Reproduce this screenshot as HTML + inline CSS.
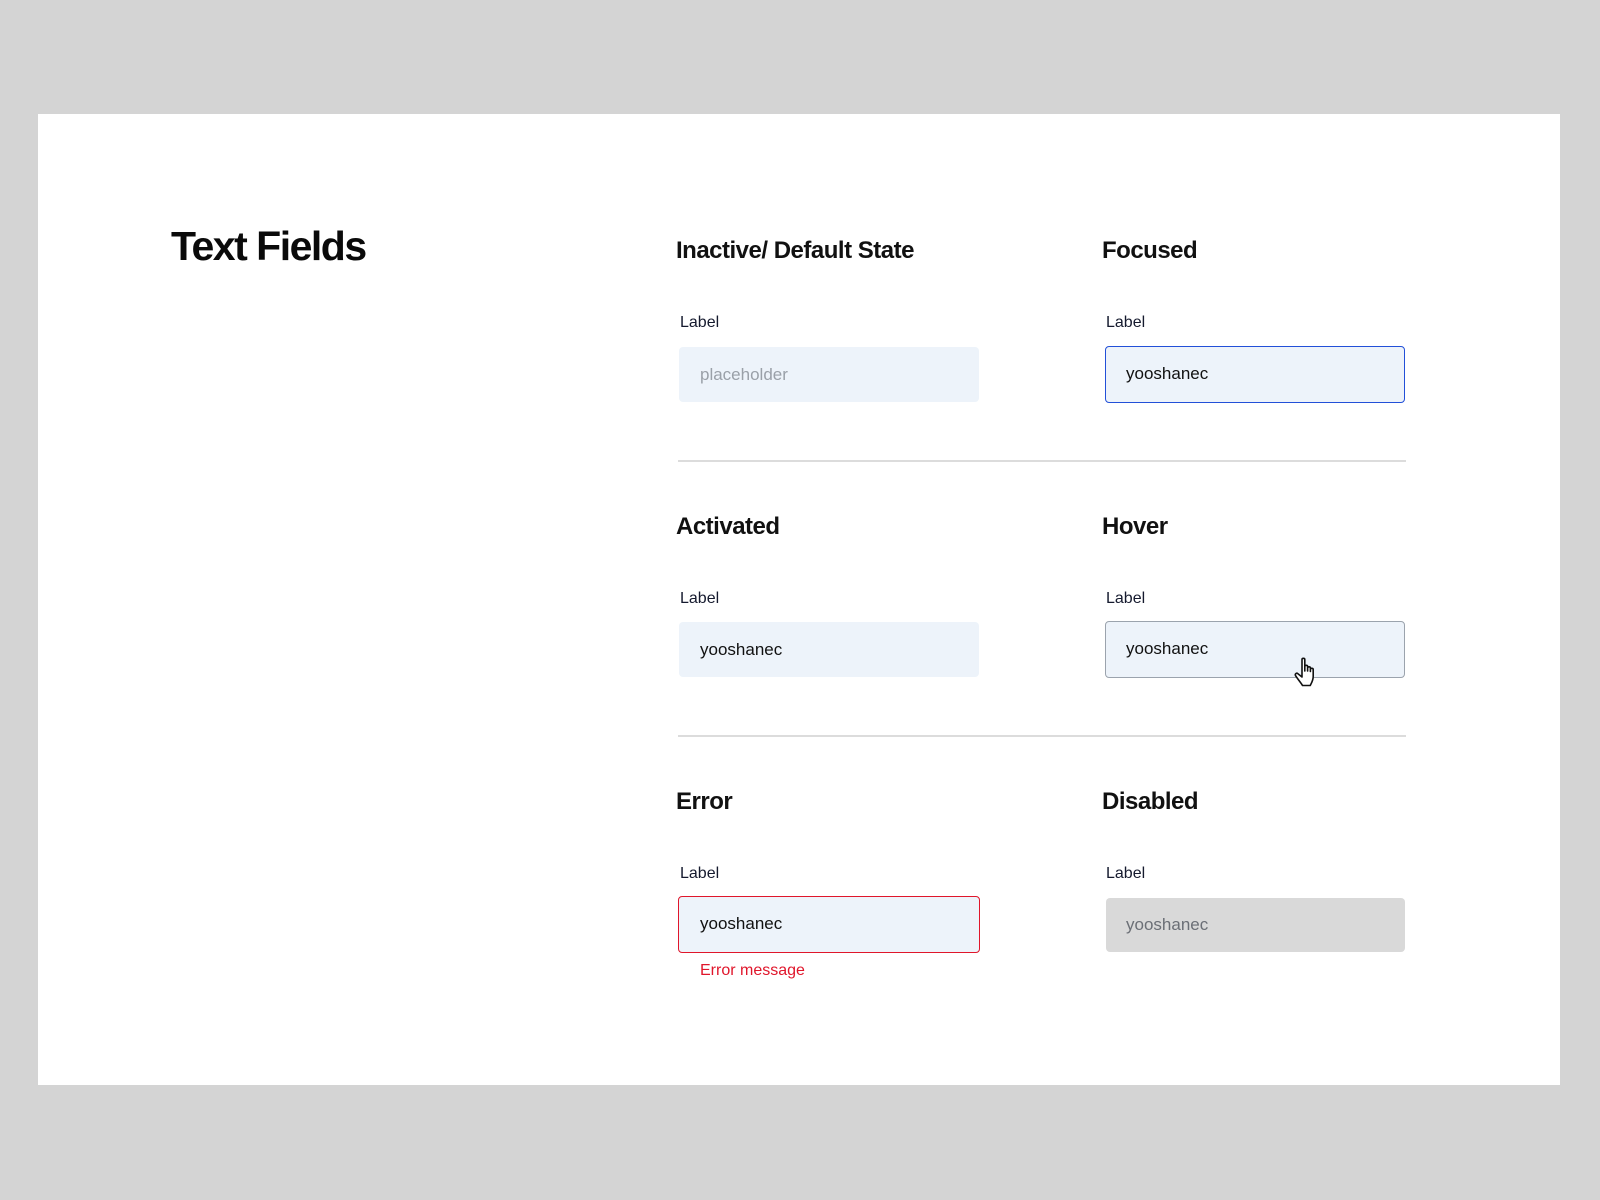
<!DOCTYPE html>
<html><head><style>
*{margin:0;padding:0;box-sizing:border-box}
body{width:1600px;height:1200px;background:#d4d4d4;position:relative;font-family:"Liberation Sans",sans-serif;overflow:hidden}
.card{position:absolute;left:38px;top:114px;width:1522px;height:971px;background:#fff}
.t{position:absolute;white-space:nowrap;line-height:1}
h1{position:absolute;left:171px;top:226px;font-size:41px;font-weight:bold;letter-spacing:-1.5px;color:#0a0a0a;line-height:1}
.h{font-size:24px;font-weight:bold;color:#111;letter-spacing:-0.5px}
.l{font-size:16px;color:#151a2e}
.box{position:absolute;width:300px;height:55px;background:#edf3fa;border-radius:4px;font-size:17px;color:#111;padding-left:21px;line-height:55px}
.div{position:absolute;left:678px;width:728px;height:2px;background:#dcdcdc}
</style></head><body>
<div class="card"></div>
<h1>Text Fields</h1>

<div class="t h" style="left:676px;top:239px">Inactive/ Default State</div>
<div class="t h" style="left:1102px;top:239px">Focused</div>
<div class="t l" style="left:680px;top:315px">Label</div>
<div class="t l" style="left:1106px;top:315px">Label</div>
<div class="box" style="left:679px;top:347px;color:#9aa0a8">placeholder</div>
<div class="box" style="left:1105px;top:346px;height:57px;border:1.5px solid #2250d8;padding-left:20px;line-height:54px">yooshanec</div>
<div class="div" style="top:460px"></div>

<div class="t h" style="left:676px;top:515px">Activated</div>
<div class="t h" style="left:1102px;top:515px">Hover</div>
<div class="t l" style="left:680px;top:591px">Label</div>
<div class="t l" style="left:1106px;top:591px">Label</div>
<div class="box" style="left:679px;top:622px">yooshanec</div>
<div class="box" style="left:1105px;top:621px;height:57px;border:1.5px solid #9ba3ad;padding-left:20px;line-height:54px">yooshanec</div>
<svg style="position:absolute;left:1293px;top:656px" width="30" height="34" viewBox="0 0 30 34">
<path d="M9 3.5c0-1.6 2.8-1.6 2.8 0V15V10.5c0-1.6 2.8-1.6 2.8 0V15v-3c0-1.6 2.8-1.6 2.8 0v3.5-2c0-1.6 2.8-1.6 2.8 0v7c0 4-2 7-3 9H9.5c-1-2-6-8-7-10-.8-1.5 1-3 2.4-1.8L9 21z" fill="#fff" stroke="#111" stroke-width="1.6" stroke-linejoin="round"/>
</svg>
<div class="div" style="top:735px"></div>

<div class="t h" style="left:676px;top:790px">Error</div>
<div class="t h" style="left:1102px;top:790px">Disabled</div>
<div class="t l" style="left:680px;top:866px">Label</div>
<div class="t l" style="left:1106px;top:866px">Label</div>
<div class="box" style="left:678px;top:896px;width:302px;height:57px;border:1.5px solid #e0162b;line-height:54px;padding-left:21px">yooshanec</div>
<div class="t" style="left:700px;top:963px;font-size:16px;color:#e0162b">Error message</div>
<div class="box" style="left:1106px;top:898px;width:299px;height:54px;background:#d9d9d9;color:#6b6f76;padding-left:20px;line-height:54px">yooshanec</div>
</body></html>
